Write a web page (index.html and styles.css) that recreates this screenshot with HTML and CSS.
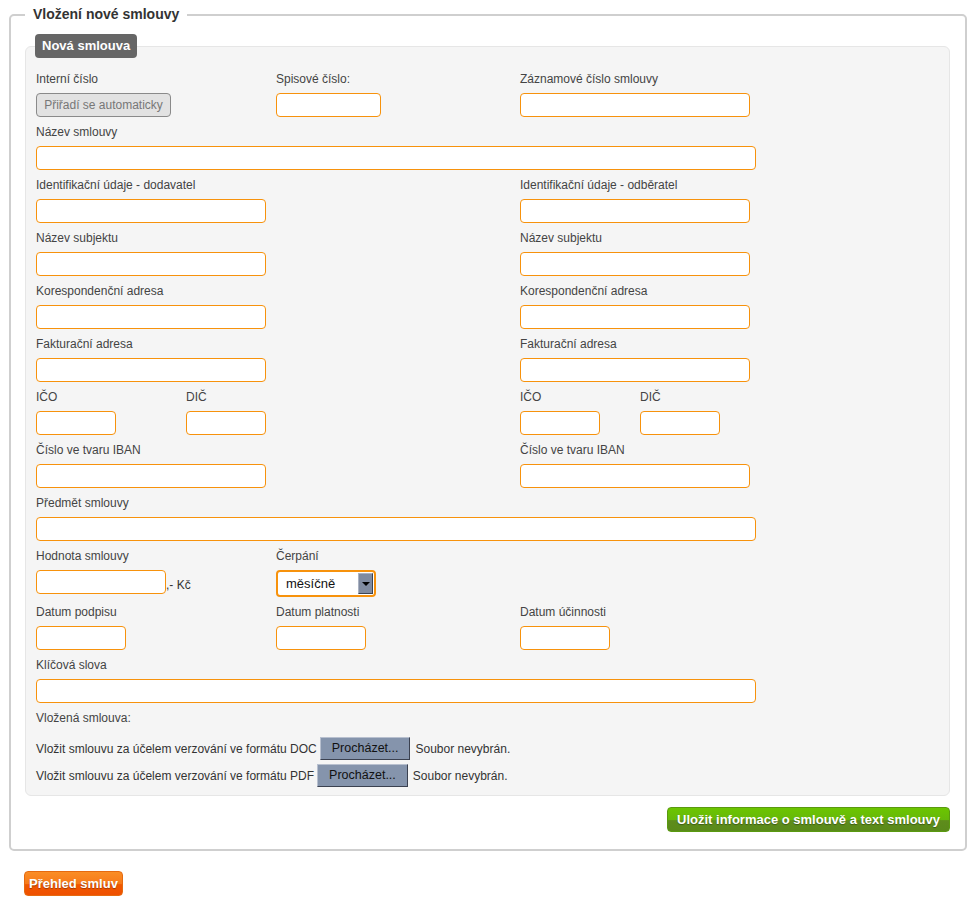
FILE: index.html
```html
<!DOCTYPE html>
<html lang="cs">
<head>
  <meta charset="UTF-8">
  <title>Vložení nové smlouvy</title>
  <link rel="stylesheet" href="styles.css">
</head>
<body>
  <fieldset class="box">
    <legend>Vložení nové smlouvy</legend>
    <div class="panel">
      <div class="tab">Nová smlouva</div>

      <div class="row">
        <div class="col c1">
          <label>Interní číslo</label>
          <button class="auto" disabled>Přiřadí se automaticky</button>
        </div>
        <div class="col c2">
          <label>Spisové číslo:</label>
          <input class="input w105" type="text">
        </div>
        <div class="col">
          <label>Záznamové číslo smlouvy</label>
          <input class="input w230" type="text">
        </div>
      </div>

      <div class="row">
        <div class="col">
          <label>Název smlouvy</label>
          <input class="input w720" type="text">
        </div>
      </div>

      <div class="row">
        <div class="col half">
          <label>Identifikační údaje - dodavatel</label>
          <input class="input w230" type="text">
        </div>
        <div class="col">
          <label>Identifikační údaje - odběratel</label>
          <input class="input w230" type="text">
        </div>
      </div>

      <div class="row">
        <div class="col half">
          <label>Název subjektu</label>
          <input class="input w230" type="text">
        </div>
        <div class="col">
          <label>Název subjektu</label>
          <input class="input w230" type="text">
        </div>
      </div>

      <div class="row">
        <div class="col half">
          <label>Korespondenční adresa</label>
          <input class="input w230" type="text">
        </div>
        <div class="col">
          <label>Korespondenční adresa</label>
          <input class="input w230" type="text">
        </div>
      </div>

      <div class="row">
        <div class="col half">
          <label>Fakturační adresa</label>
          <input class="input w230" type="text">
        </div>
        <div class="col">
          <label>Fakturační adresa</label>
          <input class="input w230" type="text">
        </div>
      </div>

      <div class="row">
        <div class="col quarter">
          <label>IČO</label>
          <input class="input w80" type="text">
        </div>
        <div class="col quarter2">
          <label>DIČ</label>
          <input class="input w80" type="text">
        </div>
        <div class="col quarter3">
          <label>IČO</label>
          <input class="input w80" type="text">
        </div>
        <div class="col">
          <label>DIČ</label>
          <input class="input w80" type="text">
        </div>
      </div>

      <div class="row">
        <div class="col half">
          <label>Číslo ve tvaru IBAN</label>
          <input class="input w230" type="text">
        </div>
        <div class="col">
          <label>Číslo ve tvaru IBAN</label>
          <input class="input w230" type="text">
        </div>
      </div>

      <div class="row">
        <div class="col">
          <label>Předmět smlouvy</label>
          <input class="input w720" type="text">
        </div>
      </div>

      <div class="row">
        <div class="col c1">
          <label>Hodnota smlouvy</label>
          <div class="inline">
            <input class="input w130" type="text"><span class="unit">,- Kč</span>
          </div>
        </div>
        <div class="col c2">
          <label>Čerpání</label>
          <div class="select">
            <span>měsíčně</span>
            <span class="arrow"></span>
          </div>
        </div>
      </div>

      <div class="row">
        <div class="col c1">
          <label>Datum podpisu</label>
          <input class="input w90" type="text">
        </div>
        <div class="col c2">
          <label>Datum platnosti</label>
          <input class="input w90" type="text">
        </div>
        <div class="col">
          <label>Datum účinnosti</label>
          <input class="input w90" type="text">
        </div>
      </div>

      <div class="row">
        <div class="col">
          <label>Klíčová slova</label>
          <input class="input w720" type="text">
        </div>
      </div>

      <div class="files">
        <label>Vložená smlouva:</label>
        <div class="file">
          Vložit smlouvu za účelem verzování ve formátu DOC
          <span class="browse">Procházet...</span>
          <span>Soubor nevybrán.</span>
        </div>
        <div class="file">
          Vložit smlouvu za účelem verzování ve formátu PDF
          <span class="browse">Procházet...</span>
          <span>Soubor nevybrán.</span>
        </div>
      </div>
    </div>

    <div class="actions">
      <button class="btn green">Uložit informace o smlouvě a text smlouvy</button>
    </div>
  </fieldset>

  <button class="btn orange back">Přehled smluv</button>
</body>
</html>
```

FILE: styles.css
```css
body {
  margin: 0;
  padding: 6px 8px 8px 8px;
  font-family: "Liberation Sans", Arial, sans-serif;
  font-size: 12px;
  color: #444;
  background: #fff;
}
.box {
  margin: 0 0 0 1px;
  padding: 0 15px 17px 14px;
  border: 2px solid #cfcfcf;
  border-radius: 5px;
}
.box legend {
  padding: 0 8px;
  font-size: 14px;
  font-weight: bold;
  line-height: 17px;
  color: #333;
}
.panel {
  position: relative;
  margin-top: 23px;
  padding: 24px 10px 6px 10px;
  background: #f5f5f5;
  border: 1px solid #e6e6e6;
  border-radius: 6px;
}
.tab {
  position: absolute;
  top: -13px;
  left: 9px;
  height: 24px;
  line-height: 24px;
  padding: 0 7px;
  background: #666;
  color: #fff;
  font-size: 13px;
  font-weight: bold;
  border-radius: 4px;
}
.row {
  display: flex;
  margin-bottom: 7px;
}
.col label, .files label {
  display: block;
  line-height: 16px;
  margin-bottom: 6px;
}
.c1 { width: 240px; }
.c2 { width: 244px; }
.half { width: 484px; }
.quarter { width: 150px; }
.quarter2 { width: 334px; }
.quarter3 { width: 120px; }
.input {
  display: block;
  box-sizing: border-box;
  height: 24px;
  margin: 0;
  padding: 2px 4px;
  border: 1px solid #f7920c;
  border-radius: 4px;
  background: #fff;
  font-family: inherit;
  font-size: 12px;
  outline: none;
}
.w80 { width: 80px; }
.w90 { width: 90px; }
.w105 { width: 105px; }
.w130 { width: 130px; }
.w230 { width: 230px; }
.w720 { width: 720px; }
.auto {
  display: block;
  box-sizing: border-box;
  width: 135px;
  height: 24px;
  margin: 0;
  padding: 0;
  border: 1px solid #8a8a8a;
  border-radius: 4px;
  background: #e2e2e2;
  color: #777;
  font-family: inherit;
  font-size: 12px;
}
.inline {
  display: flex;
  align-items: flex-end;
}
.unit {
  line-height: 18px;
  color: #333;
}
.select {
  box-sizing: border-box;
  width: 100px;
  height: 27px;
  display: flex;
  align-items: center;
  justify-content: space-between;
  padding: 1px 1px 1px 8px;
  border: 2px solid #f7920c;
  border-radius: 4px;
  background: #fff;
  color: #111;
  font-size: 13px;
}
.arrow {
  position: relative;
  box-sizing: border-box;
  width: 15px;
  height: 21px;
  background: #808ba0;
  border: 1px solid #3d4452;
  border-top-color: #aab2c2;
  border-left-color: #aab2c2;
}
.arrow::after {
  content: "";
  position: absolute;
  top: 8px;
  left: 3px;
  border-left: 4px solid transparent;
  border-right: 4px solid transparent;
  border-top: 4px solid #000;
}
.files label {
  margin-bottom: 9px;
}
.file {
  display: flex;
  align-items: center;
  gap: 5px;
  height: 27px;
  color: #333;
}
.browse {
  display: inline-block;
  box-sizing: border-box;
  height: 23px;
  line-height: 21px;
  padding: 0 11px;
  margin-left: -2px;
  background: #8594ac;
  border: 1px solid #3b4150;
  border-top-color: #b8c0cf;
  border-left-color: #b8c0cf;
  color: #111;
  font-size: 12.5px;
}
.actions {
  display: flex;
  justify-content: flex-end;
  margin-top: 11px;
}
.btn {
  height: 25px;
  padding: 0 8px;
  border: none;
  border-radius: 4px;
  color: #fff;
  font-family: inherit;
  font-size: 13px;
  font-weight: bold;
  text-shadow: 0 1px 1px rgba(0,0,0,0.35);
  cursor: pointer;
}
.green {
  background: linear-gradient(#6cc500 0%, #66b80a 50%, #5e8c1c 55%, #5a8a1a 100%);
  border: 1px solid #5a9a10;
  padding: 0 9px;
}
.orange {
  background: linear-gradient(#fa8d25 0%, #f77a1a 50%, #f15800 55%, #ef5000 100%);
  border: 1px solid #e56a10;
  height: 25px;
  padding: 0 4px;
}
.back {
  margin: 20px 0 0 16px;
}
```
